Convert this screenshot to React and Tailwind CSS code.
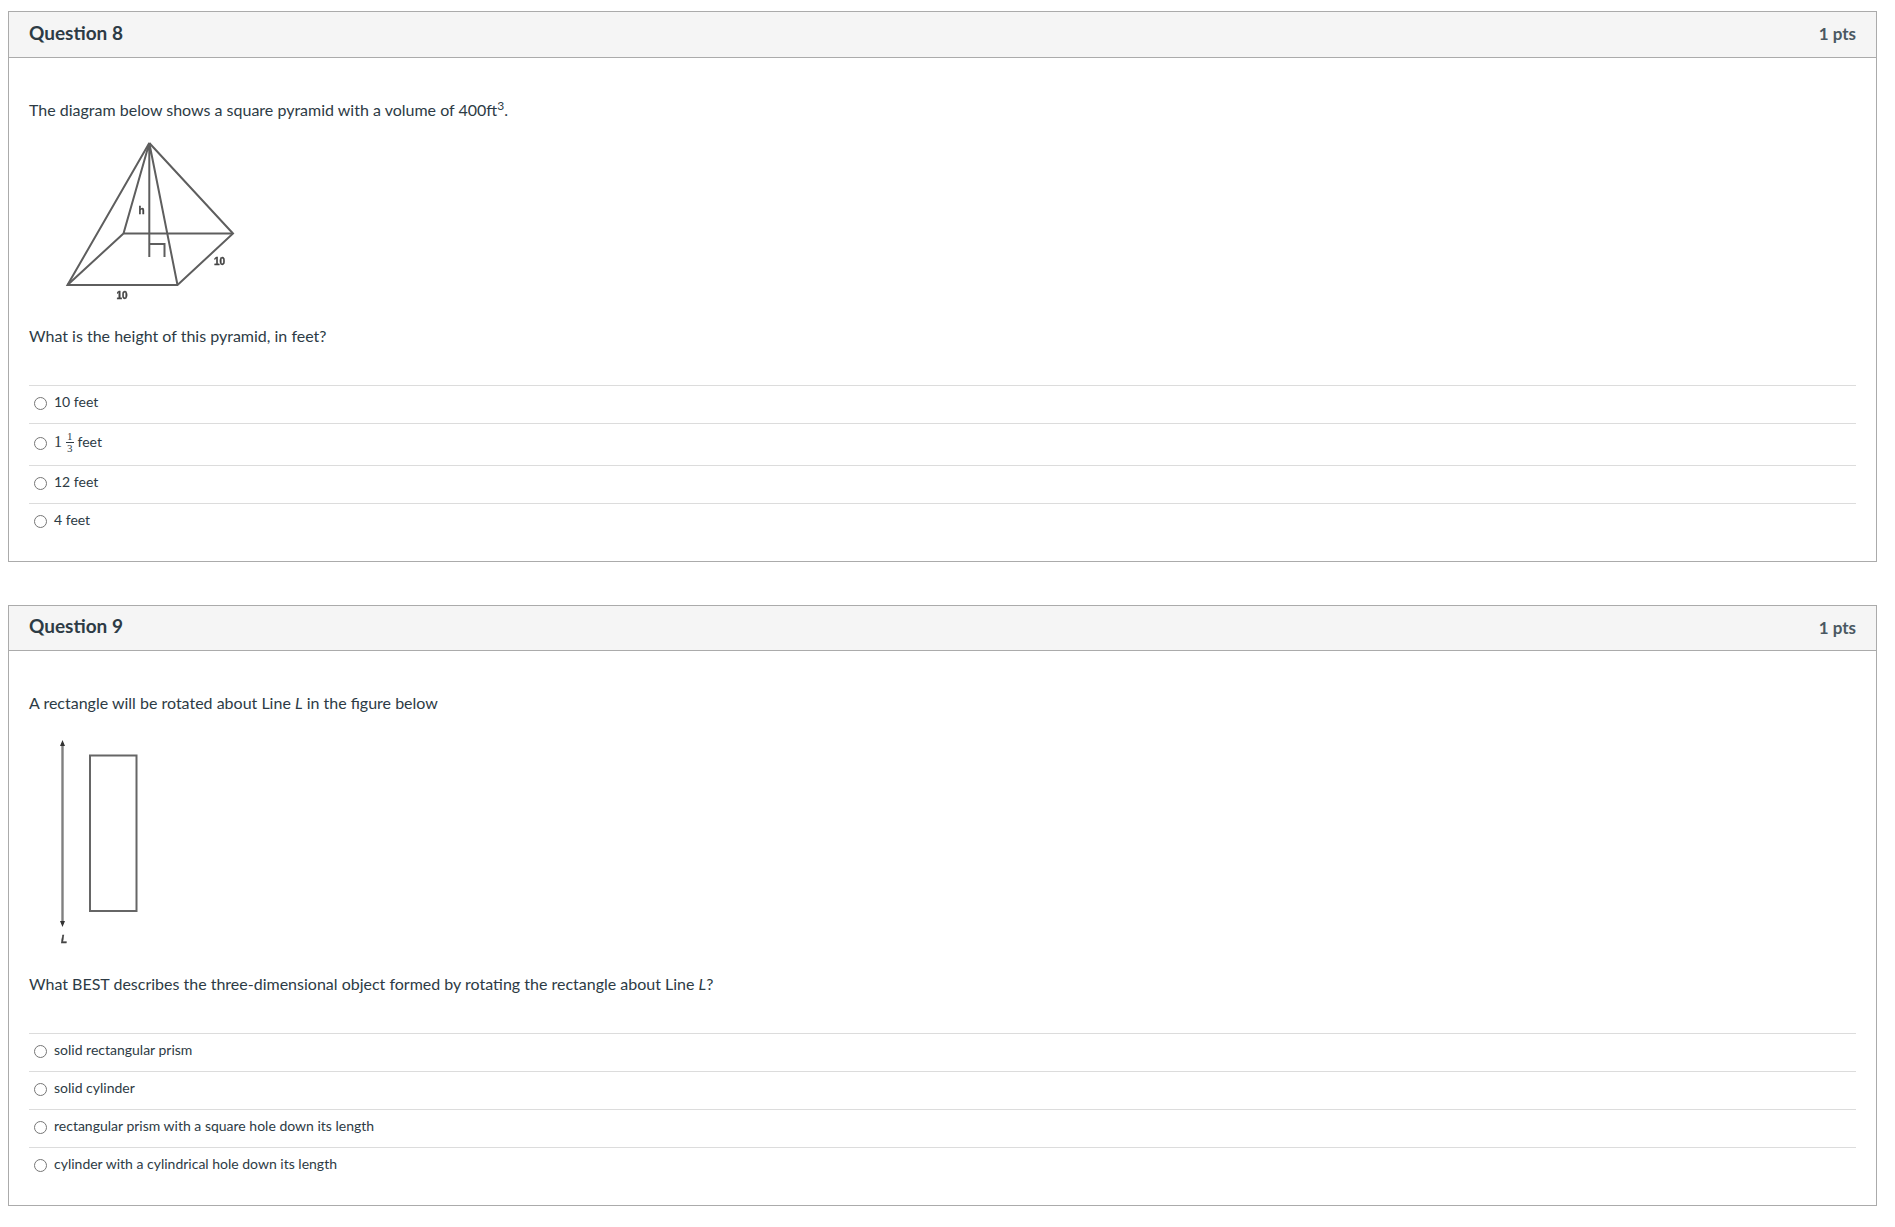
const Option = ({ name, tall, children }) => (
	<label className={`flex items-center gap-[7.5px] pl-[4.5px] pb-[5px] border-t border-[#dcdcdc] text-sm text-[#2d3b45] ${tall ? "h-[42px]" : "h-[38px]"}`}>
		<input type="radio" name={name} className="m-0 w-[13px] h-[13px] shrink-0 translate-y-[1px]" />
		<span className="flex items-center leading-[20px]">{children}</span>
	</label>
);

const Question = ({ title, headerClass, children }) => (
	<section className="border border-[#ababab] bg-white">
		<header className={`flex items-center justify-between px-[20px] bg-[#f5f5f5] border-b border-[#ababab] text-[#2d3b45] ${headerClass}`}>
			<h2 className="text-[19px] font-bold leading-[36px] -mt-[4px]">{title}</h2>
			<span className="text-[17px] font-bold leading-[24px] -mt-[1px] text-[#4a5862]">1 pts</span>
		</header>
		<div className="px-[20px] pt-[40px] pb-[20px] text-base leading-[24px] text-[#2d3b45]">{children}</div>
	</section>
);

const Fraction = () => (
	<span className="inline-flex items-center mr-[4px] font-['Liberation_Serif',serif]">
		<span className="text-[16px] mr-[4px]">1</span>
		<span className="inline-flex flex-col items-center text-[11px] leading-[11px]">
			<span className="px-[1px] border-b border-[#2d3b45]">1</span>
			<span>3</span>
		</span>
	</span>
);

const PyramidDiagram = () => (
	<svg width="220" height="202" viewBox="0 0 220 202" className="block blur-[0.5px]" fill="none" stroke="#5e5e5e" strokeWidth="2">
		<path d="M120.3 21 L38.5 163 L148.5 163 L204 111.5 L120.3 21" />
		<path d="M120.3 21 L94.5 111.5 L204 111.5 M94.5 111.5 L38.5 163 M120.3 21 L148.5 163 M120.3 21 L120.3 135" />
		<path d="M120.3 122 L135.5 122 L135.5 135" />
		<g fill="#444" stroke="#444" strokeWidth="0.4" fontSize="10" fontWeight="700" textAnchor="middle" fontFamily="Arial, 'Liberation Sans', sans-serif">
			<text x="112.5" y="92">h</text>
			<text x="190.5" y="143">10</text>
			<text x="93" y="177">10</text>
		</g>
	</svg>
);

const LineDiagram = () => (
	<svg width="120" height="257" viewBox="0 0 120 257" className="block blur-[0.5px]" fill="none" stroke="#666666" strokeWidth="2">
		<path d="M33.5 28 L33.5 209" stroke="#808080" strokeWidth="2.4" />
		<path d="M33.5 25 L31 31 L36 31 Z M33.5 212 L31 206 L36 206 Z" fill="#333" stroke="none" />
		<rect x="61" y="40.5" width="46.5" height="155.5" />
		<text x="35" y="228" fill="#444" stroke="#444" strokeWidth="0.4" fontSize="10" fontWeight="700" fontStyle="italic" textAnchor="middle" fontFamily="Arial, 'Liberation Sans', sans-serif">L</text>
	</svg>
);

export default function App() {
	return (
		<main className="min-h-[1227px] bg-white pt-[11px] pl-[8px] pr-[18px] font-['Lato','Open_Sans',sans-serif]">
			<Question title="Question 8" headerClass="h-[46px]">
				<p>The diagram below shows a square pyramid with a volume of 400ft<sup className="text-[12px]">3</sup>.</p>
				<PyramidDiagram />
				<p>What is the height of this pyramid, in feet?</p>
				<div className="mt-[37px]">
					<Option name="q8">10 feet</Option>
					<Option name="q8" tall>
						<Fraction /> feet
					</Option>
					<Option name="q8">12 feet</Option>
					<Option name="q8">4 feet</Option>
				</div>
			</Question>
			<div className="mt-[43px]">
				<Question title="Question 9" headerClass="h-[45px]">
					<p>A rectangle will be rotated about Line <em>L</em> in the figure below</p>
					<LineDiagram />
					<p>What BEST describes the three-dimensional object formed by rotating the rectangle about Line <em>L</em>?</p>
					<div className="mt-[37px]">
						<Option name="q9">solid rectangular prism</Option>
						<Option name="q9">solid cylinder</Option>
						<Option name="q9">rectangular prism with a square hole down its length</Option>
						<Option name="q9">cylinder with a cylindrical hole down its length</Option>
					</div>
				</Question>
			</div>
		</main>
	);
}
